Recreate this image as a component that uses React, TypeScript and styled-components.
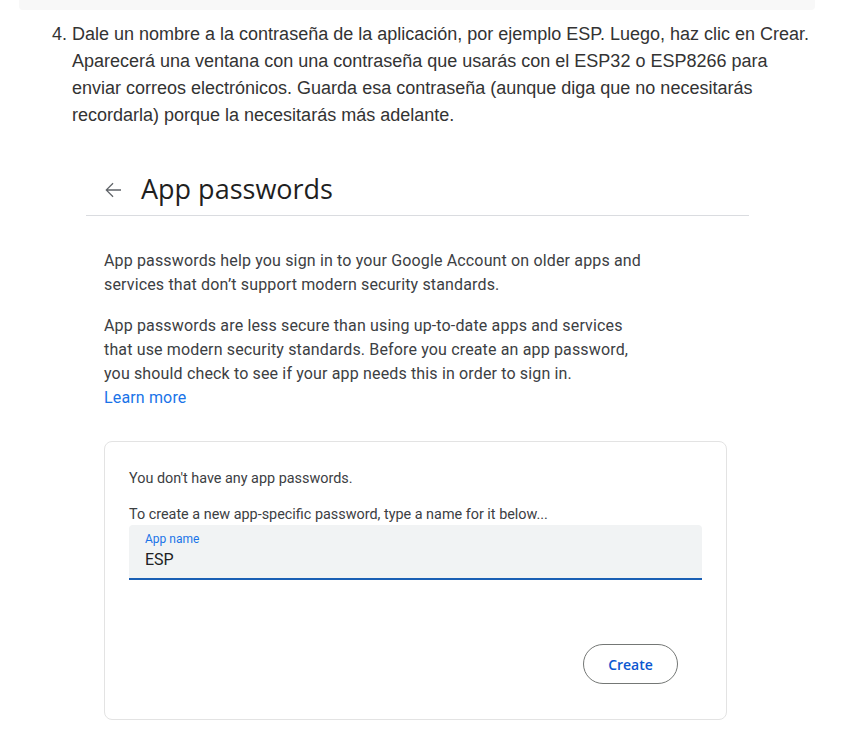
import { createGlobalStyle, styled } from 'styled-components'

const Global = createGlobalStyle`
body {
  margin: 0;
  background: #fff;
  font-family: "Liberation Sans", Arial, sans-serif;
}
`

const App = () => {
  return (
    <Page>
      <Global />
      <TopBar />
      <Steps start={4}>
        <li>
          Dale un nombre a la contraseña de la aplicación, por ejemplo ESP. Luego, haz clic en Crear.
          Aparecerá una ventana con una contraseña que usarás con el ESP32 o ESP8266 para enviar
          correos electrónicos. Guarda esa contraseña (aunque diga que no necesitarás recordarla)
          porque la necesitarás más adelante.
        </li>
      </Steps>
      <Shot>
        <Header>
          <Back>
            <svg width="24" height="24" viewBox="0 0 24 24">
              <path d="M20 11.3H6.9l5.6-5.6-.9-.9L4.4 12l7.2 7.2.9-.9-5.6-5.6H20z" fill="#5f6368" />
            </svg>
          </Back>
          <Title>App passwords</Title>
        </Header>
        <Body>
          <Para>
            App passwords help you sign in to your Google Account on older apps and services that
            don’t support modern security standards.
          </Para>
          <Para>
            App passwords are less secure than using up-to-date apps and services that use modern
            security standards. Before you create an app password, you should check to see if your
            app needs this in order to sign in.
            <br />
            <Link>Learn more</Link>
          </Para>
          <Card>
            <Note>You don't have any app passwords.</Note>
            <Note $gap>To create a new app-specific password, type a name for it below...</Note>
            <Field>
              <Label>App name</Label>
              <Value>ESP</Value>
            </Field>
            <Actions>
              <CreateButton>Create</CreateButton>
            </Actions>
          </Card>
        </Body>
      </Shot>
    </Page>
  )
}

export default App

const Page = styled.div`
width: 842px;
height: 748px;
overflow: hidden;
background: #fff;
`
const TopBar = styled.div`
margin: 0 27px 0 19px;
height: 10px;
background: #f8f8f8;
border-radius: 0 0 4px 4px;
`
const Steps = styled.ol`
margin: 11px 26px 0 0;
padding-left: 72px;
font-size: 18px;
line-height: 27px;
color: #333;
li::marker {
  color: #333;
}
`
const Shot = styled.div`
margin: 33px 0 0 86px;
width: 663px;
`
const Header = styled.div`
display: flex;
align-items: center;
height: 53px;
border-bottom: 1px solid #dadce0;
`
const Back = styled.div`
width: 24px;
height: 24px;
margin: 2px 0 0 15px;
`
const Title = styled.div`
margin-left: 16px;
font-family: "Open Sans", Roboto, sans-serif;
font-size: 27px;
color: #1f1f1f;
`
const Body = styled.div`
padding: 33px 0 0 18px;
`
const Para = styled.p`
margin: 0 0 18px;
width: 545px;
font-family: Roboto, "Open Sans", sans-serif;
font-size: 16px;
letter-spacing: 0.15px;
line-height: 23.7px;
color: #3c4043;
`
const Link = styled.span`
color: #1a73e8;
`
const Card = styled.div`
margin-top: 32px;
width: 623px;
height: 279px;
box-sizing: border-box;
border: 1px solid #e3e3e3;
border-radius: 8px;
padding: 27px 24px 0 24px;
font-family: Roboto, sans-serif;
`
const Note = styled.div<{ $gap?: boolean }>`
font-size: 14.4px;
line-height: 19px;
color: #3c4043;
margin-top: ${p => (p.$gap ? '17px' : '0')};
`
const Field = styled.div`
margin-top: 1px;
height: 55px;
box-sizing: border-box;
background: #f1f3f4;
border-radius: 4px 4px 0 0;
border-bottom: 2px solid #1a5fb4;
padding: 7px 16px 0;
`
const Label = styled.div`
font-size: 12px;
line-height: 14px;
color: #1a73e8;
`
const Value = styled.div`
margin-top: 4px;
font-size: 16px;
line-height: 19px;
color: #202124;
`
const Actions = styled.div`
display: flex;
justify-content: flex-end;
padding: 64px 24px 0 0;
`
const CreateButton = styled.button`
width: 95px;
height: 40px;
border: 1px solid #747775;
border-radius: 20px;
background: #fff;
color: #0b57d0;
font-family: "Open Sans", Roboto, sans-serif;
font-size: 14px;
font-weight: 600;
cursor: pointer;
`
